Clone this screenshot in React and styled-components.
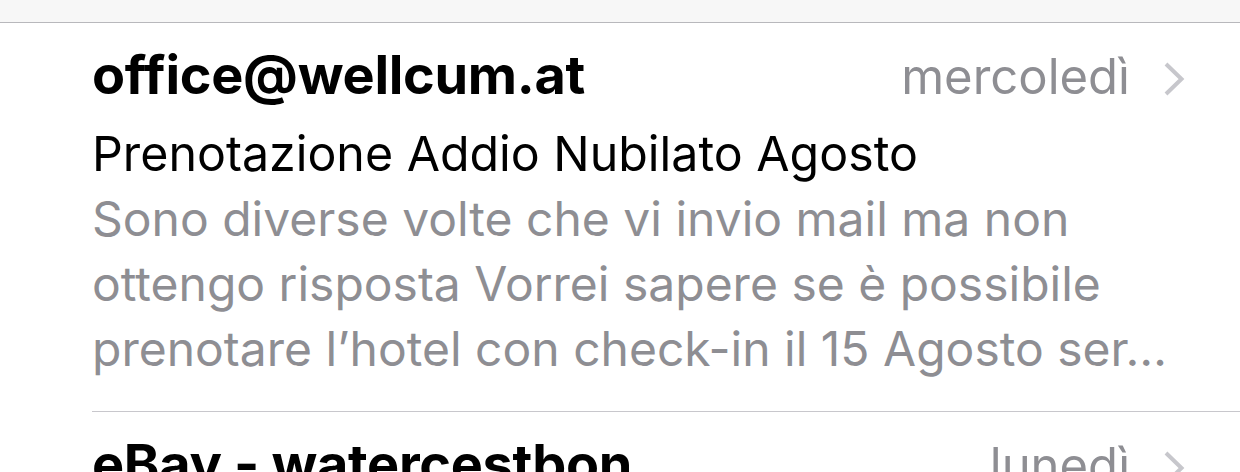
import React from "react";
import styled, { createGlobalStyle } from "styled-components";

const GlobalStyle = createGlobalStyle`
  html, body {
    margin: 0;
    padding: 0;
    height: 472px;
    overflow: hidden;
    background: #fff;
    font-family: Inter, "Liberation Sans", Arial, sans-serif;
    -webkit-font-smoothing: antialiased;
  }
`;

const messages = [
  {
    id: 1,
    sender: "office@wellcum.at",
    date: "mercoledì",
    subject: "Prenotazione Addio Nubilato Agosto",
    preview: [
      "Sono diverse volte che vi invio mail ma non",
      "ottengo risposta Vorrei sapere se è possibile",
      "prenotare l’hotel con check-in il 15 Agosto ser…",
    ],
  },
  {
    id: 2,
    sender: "eBay - watercestbon",
    date: "lunedì",
    subject: "",
    preview: [],
  },
];

const Chevron = () => (
  <ChevronIcon viewBox="0 0 22 36" width="22" height="36">
    <polyline
      points="3,3 18.5,18 3,33"
      fill="none"
      stroke="#c7c7cc"
      strokeWidth="4"
    />
  </ChevronIcon>
);

const MessageRow = ({ sender, date, subject, preview }) => {
  return (
    <Row>
      <Header>
        <Sender>{sender}</Sender>
        <Meta>
          <DateLabel>{date}</DateLabel>
          <Chevron />
        </Meta>
      </Header>
      {subject ? <Subject>{subject}</Subject> : ""}
      {preview.length ? (
        <Preview>
          {preview.map((line, i) => (
            <PreviewLine key={i}>{line}</PreviewLine>
          ))}
        </Preview>
      ) : (
        ""
      )}
    </Row>
  );
};

export default function App() {
  return (
    <>
      <GlobalStyle />
      <Page>
        <TopBar />
        <List>
          {messages.map((m) => (
            <MessageRow key={m.id} {...m} />
          ))}
        </List>
      </Page>
    </>
  );
}

const Page = styled.div`
  width: 1240px;
  height: 472px;
  overflow: hidden;
  background: #fff;
`;

const TopBar = styled.div`
  height: 22px;
  background: #f7f7f7;
  border-bottom: 1px solid #b8b8bc;
`;

const List = styled.div`
  display: flex;
  flex-direction: column;
`;

const Row = styled.div`
  margin-left: 92px;
  padding: 19px 55px 30px 0;
  border-bottom: 1px solid #c8c7cc;
`;

const Header = styled.div`
  display: flex;
  align-items: baseline;
  justify-content: space-between;
  height: 66px;
`;

const Sender = styled.div`
  font-size: 54px;
  font-weight: 700;
  line-height: 66px;
  color: #000;
  letter-spacing: -0.3px;
  white-space: nowrap;
`;

const Meta = styled.div`
  display: flex;
  align-items: baseline;
  gap: 33px;
`;

const DateLabel = styled.span`
  font-size: 49px;
  line-height: 66px;
  color: #8e8e93;
`;

const ChevronIcon = styled.svg`
  display: block;
  align-self: center;
  position: relative;
  top: 2px;
`;

const Subject = styled.div`
  margin-top: 13px;
  font-size: 48.3px;
  line-height: 65px;
  color: #000;
  white-space: nowrap;
`;

const Preview = styled.div`
  display: flex;
  flex-direction: column;
  font-size: 48px;
  line-height: 65px;
  color: #8e8e93;
`;

const PreviewLine = styled.div`
  white-space: nowrap;
`;
